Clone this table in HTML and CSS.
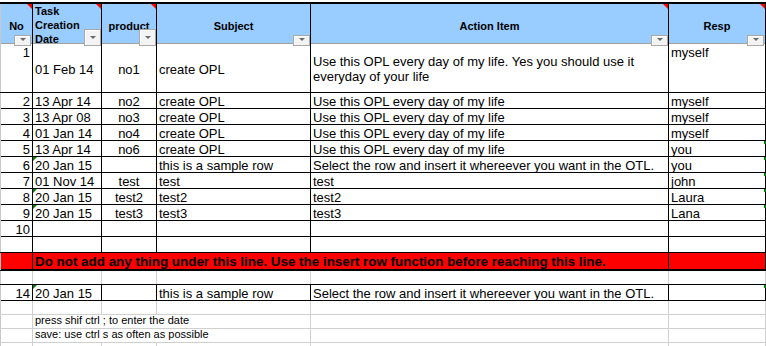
FILE: index.html
```html
<!DOCTYPE html>
<html>
<head>
    <title>OPL Tracker</title>
    <link rel="stylesheet" href="styles.css">
</head>
<body>
    <div class="sheet">
        <div class="row row-head">
            <div class="cell">No<span class="comment"></span><span class="filter filter-in"></span></div>
            <div class="cell cell-wrap">Task<br>Creation<br>Date<span class="comment"></span><span class="filter filter-tall"></span></div>
            <div class="cell">product<span class="comment"></span><span class="filter filter-tall"></span></div>
            <div class="cell">Subject<span class="filter"></span></div>
            <div class="cell">Action Item<span class="comment"></span><span class="filter"></span></div>
            <div class="cell">Resp<span class="comment"></span><span class="filter filter-in"></span></div>
        </div>

        <div class="row row-tall">
            <div class="cell num">1</div>
            <div class="cell mid">01 Feb 14</div>
            <div class="cell mid center">no1</div>
            <div class="cell mid">create OPL</div>
            <div class="cell wrap">Use this OPL every day of my life. Yes you should use it everyday of your life</div>
            <div class="cell">myself</div>
        </div>
        <div class="row">
            <div class="cell num">2</div>
            <div class="cell">13 Apr 14</div>
            <div class="cell center">no2</div>
            <div class="cell">create OPL</div>
            <div class="cell">Use this OPL every day of my life</div>
            <div class="cell">myself</div>
        </div>
        <div class="row">
            <div class="cell num">3</div>
            <div class="cell">13 Apr 08</div>
            <div class="cell center">no3</div>
            <div class="cell">create OPL</div>
            <div class="cell">Use this OPL every day of my life</div>
            <div class="cell">myself</div>
        </div>
        <div class="row">
            <div class="cell num">4</div>
            <div class="cell">01 Jan 14</div>
            <div class="cell center">no4</div>
            <div class="cell">create OPL</div>
            <div class="cell">Use this OPL every day of my life</div>
            <div class="cell">myself</div>
        </div>
        <div class="row">
            <div class="cell num">5</div>
            <div class="cell">13 Apr 14</div>
            <div class="cell center">no6</div>
            <div class="cell">create OPL</div>
            <div class="cell">Use this OPL every day of my life</div>
            <div class="cell">you<span class="edge"></span></div>
        </div>
        <div class="row">
            <div class="cell num">6</div>
            <div class="cell">20 Jan 15<span class="error"></span></div>
            <div class="cell center"></div>
            <div class="cell">this is a sample row</div>
            <div class="cell">Select the row and insert it whereever you want in the OTL.</div>
            <div class="cell">you<span class="edge"></span></div>
        </div>
        <div class="row">
            <div class="cell num">7</div>
            <div class="cell">01 Nov 14</div>
            <div class="cell center">test</div>
            <div class="cell">test</div>
            <div class="cell">test</div>
            <div class="cell">john<span class="edge"></span></div>
        </div>
        <div class="row">
            <div class="cell num">8</div>
            <div class="cell">20 Jan 15<span class="error"></span></div>
            <div class="cell center">test2</div>
            <div class="cell">test2</div>
            <div class="cell">test2</div>
            <div class="cell">Laura<span class="edge"></span></div>
        </div>
        <div class="row">
            <div class="cell num">9</div>
            <div class="cell">20 Jan 15<span class="error"></span></div>
            <div class="cell center">test3</div>
            <div class="cell">test3</div>
            <div class="cell">test3</div>
            <div class="cell">Lana<span class="edge"></span></div>
        </div>
        <div class="row">
            <div class="cell num">10</div>
            <div class="cell"></div>
            <div class="cell"></div>
            <div class="cell"></div>
            <div class="cell"></div>
            <div class="cell"></div>
        </div>
        <div class="row">
            <div class="cell"></div>
            <div class="cell"></div>
            <div class="cell"></div>
            <div class="cell"></div>
            <div class="cell"></div>
            <div class="cell"></div>
        </div>

        <div class="row row-red">
            <div class="cell"></div>
            <div class="cell">Do not add any thing under this line. Use the insert row function before reaching this line.</div>
            <div class="cell"></div>
        </div>

        <div class="row row-gap">
            <div class="cell"></div>
            <div class="cell"></div>
            <div class="cell"></div>
            <div class="cell"></div>
            <div class="cell"></div>
            <div class="cell"></div>
        </div>

        <div class="row">
            <div class="cell num">14</div>
            <div class="cell">20 Jan 15<span class="error"></span></div>
            <div class="cell"></div>
            <div class="cell">this is a sample row</div>
            <div class="cell">Select the row and insert it whereever you want in the OTL.</div>
            <div class="cell"><span class="edge"></span></div>
        </div>

        <div class="row row-grid">
            <div class="cell"></div>
            <div class="cell"></div>
            <div class="cell"></div>
            <div class="cell"></div>
            <div class="cell"></div>
            <div class="cell"></div>
        </div>
        <div class="row row-grid row-note">
            <div class="cell"></div>
            <div class="cell">press shif ctrl ; to enter the date</div>
            <div class="cell"></div>
            <div class="cell"></div>
        </div>
        <div class="row row-grid row-note">
            <div class="cell"></div>
            <div class="cell">save: use ctrl s as often as possible</div>
            <div class="cell"></div>
            <div class="cell"></div>
        </div>
        <div class="row row-grid">
            <div class="cell"></div>
            <div class="cell"></div>
            <div class="cell"></div>
            <div class="cell"></div>
            <div class="cell"></div>
            <div class="cell"></div>
        </div>
    </div>
</body>
</html>
```

FILE: styles.css
```css
body {
    margin: 0;
    background-color: #fff;
    color: #000;
    font-family: "Liberation Sans", Arial, sans-serif;
    font-size: 13px;
}

.sheet {
    width: 766px;
    padding-top: 2px;
}

.row {
    display: grid;
    grid-template-columns: 33px 69px 55px 154px 358px 97px;
    height: 16px;
    border-bottom: 1px solid #000;
    box-sizing: border-box;
}

.cell {
    position: relative;
    border-right: 1px solid #000;
    padding: 0 2px;
    line-height: 17px;
    white-space: nowrap;
    box-sizing: border-box;
}

.cell:first-child {
    border-left: 1px solid #c8c8c8;
}

.num {
    text-align: right;
}

.center {
    text-align: center;
}

/* header */

.row-head {
    height: 42px;
    border-top: 2px solid #000;
    border-bottom-color: #a0a0a0;
    background-color: #99ccff;
    font-size: 11px;
    font-weight: bold;
}

.row-head .cell {
    display: flex;
    align-items: center;
    justify-content: center;
    padding-top: 2px;
    line-height: 13px;
}

.row-head .cell-wrap {
    display: block;
    padding-top: 0;
    line-height: 14px;
}

.comment {
    position: absolute;
    top: 0;
    right: 0;
    width: 0;
    height: 0;
    border-top: 5px solid #ff0000;
    border-left: 5px solid transparent;
}

.filter {
    position: absolute;
    right: 0;
    bottom: 0;
    width: 17px;
    height: 11px;
    border: 1px solid #a9a9a9;
    background-color: #f3f3f3;
    box-shadow: inset 1px 1px 0 #fff;
    box-sizing: border-box;
}

.filter::after {
    content: "";
    position: absolute;
    left: 5px;
    top: 2px;
    border-left: 3px solid transparent;
    border-right: 3px solid transparent;
    border-top: 3px solid #6b6b6b;
}

.filter-tall {
    height: 17px;
}

.filter-tall::after {
    top: 6px;
}

.filter-in {
    right: 1px;
}

/* first data row */

.row-tall {
    height: 49px;
}

.mid {
    padding-top: 17px;
}

.wrap {
    padding-top: 10px;
    line-height: 15px;
    white-space: normal;
}

.error {
    position: absolute;
    top: 0;
    left: 0;
    width: 0;
    height: 0;
    border-top: 4px solid #008000;
    border-right: 4px solid transparent;
}

.edge {
    position: absolute;
    top: 0;
    right: -1px;
    width: 2px;
    height: 3px;
    background-color: #008000;
}

/* stop line */

.row-red {
    grid-template-columns: 33px 636px 97px;
    height: 18px;
    border-bottom-width: 2px;
    background-color: #ff0000;
    font-size: 13.4px;
    font-weight: bold;
}

.row-gap {
    height: 14px;
}

.row-gap .cell,
.row-grid .cell {
    border-right-color: #d0d0d0;
}

.row-grid {
    height: 14px;
    border-bottom-color: #d0d0d0;
}

.row-note {
    grid-template-columns: 33px 278px 358px 97px;
}

.row-note .cell {
    font-size: 11px;
    line-height: 11px;
}
```
